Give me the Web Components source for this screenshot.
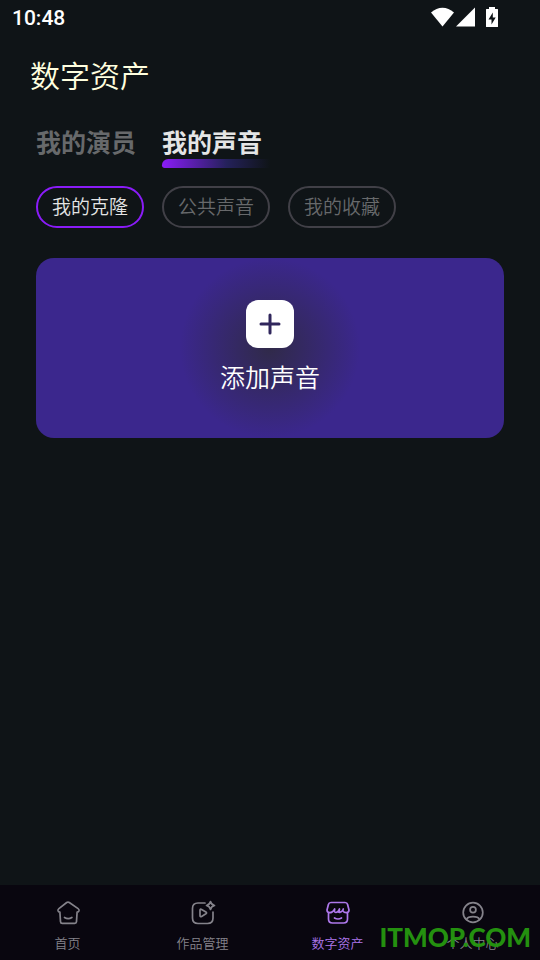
<!DOCTYPE html>
<html lang="zh-CN">
<head>
<meta charset="utf-8">
<meta name="viewport" content="width=device-width, initial-scale=1">
<title>数字资产</title>
<style>
html, body { margin: 0; height: 100%; background: #0f1417; }
body { font-family: Roboto, "Noto Sans CJK SC", sans-serif; }
</style>
</head>
<body>
<assets-app></assets-app>
<script>
const define = (name, html, setup) => {
  const template = document.createElement('template');
  template.innerHTML = html;
  customElements.define(name, class extends HTMLElement {
    constructor() {
      super();
      this.attachShadow({ mode: 'open' }).append(template.content.cloneNode(true));
    }
    connectedCallback() { if (setup) setup(this, this.shadowRoot); }
  });
};

define('status-bar', `
<style>
:host { display: flex; align-items: center; justify-content: space-between; height: 36px; padding: 0 41px 0 12px; color: #fff; }
time { font: 500 21px/36px Roboto, sans-serif; }
svg { display: block; margin-bottom: 2px; }
</style>
<time>10:48</time>
<svg width="68" height="20" viewBox="0 0 68 20" fill="#fff" aria-hidden="true">
  <path d="M0 5.500C7-.8 16-.8 23 5.500L11.500 19.500Z"/>
  <path d="M25 19.500H44V.5Z"/>
  <path fill-rule="evenodd" d="M58 0h6v2h2.500q.5 0 .5.500v17q0 .5-.5.500h-11q-.5 0-.5-.5v-17q0-.5.500-.5H58ZM61.800 5.500l-4.300 7h3v5l4.200-7h-2.900Z"/>
</svg>`);

define('tab-item', `
<style>
:host { display: block; }
button { display: block; border: 0; padding: 0; background: none; color: #67696b; font: 700 25px/36px "Noto Sans CJK SC", sans-serif; cursor: pointer; }
.line { height: 9px; margin-right: -8px; border-radius: 9px 0 0 4px; }
:host([active]) button { color: #e4e5e5; }
:host([active]) .line { background: linear-gradient(90deg, #8a1cf8, #24215a 60%, #0f1417); }
</style>
<button type="button" role="tab"><slot></slot></button><div class="line"></div>`,
(host, root) => root.querySelector('button').setAttribute('aria-selected', host.hasAttribute('active')));

define('filter-chip', `
<style>
:host { display: block; }
button { box-sizing: border-box; height: 42px; padding: 0 14px 2px; border: 2px solid #414047; border-radius: 21px; background: none; color: #67696b; font: 350 19px/36px "Noto Sans CJK SC", sans-serif; cursor: pointer; }
:host([active]) button { border-color: #8a1cf8; color: #e4e5e5; }
</style>
<button type="button"><slot></slot></button>`,
(host, root) => root.querySelector('button').setAttribute('aria-pressed', host.hasAttribute('active')));

define('add-card', `
<style>
:host { display: block; }
button { display: flex; flex-direction: column; align-items: center; justify-content: center; gap: 9px; width: 100%; height: 180px; padding: 0 0 2px; border: 0; border-radius: 18px; background: radial-gradient(circle 90px at center, #302a49, #3b278d) #3b278d; color: #fff; font: 350 25px/38px "Noto Sans CJK SC", sans-serif; cursor: pointer; }
.plus { display: grid; place-items: center; width: 48px; height: 48px; border-radius: 12px; background: #fff; }
</style>
<button type="button">
  <span class="plus"><svg width="22" height="22" viewBox="0 0 22 22" fill="none" stroke="#30265c" stroke-width="3" stroke-linecap="round" aria-hidden="true"><path d="M11 2v18M2 11h18"/></svg></span>
  <span><slot></slot></span>
</button>`);

define('nav-item', `
<style>
:host { display: block; flex: 1; }
a { display: flex; flex-direction: column; align-items: center; gap: 6px; padding-top: 15px; color: #85838b; text-decoration: none; font: 350 13px/22px "Noto Sans CJK SC", sans-serif; }
:host([active]) a { color: #ae78ec; }
::slotted(svg) { display: block; width: 26px; height: 26px; fill: none; stroke: currentColor; stroke-width: 1.700; stroke-linecap: round; stroke-linejoin: round; }
</style>
<a href="#"><slot name="icon"></slot><span><slot></slot></span></a>`,
(host, root) => { if (host.hasAttribute('active')) root.querySelector('a').setAttribute('aria-current', 'page'); });

define('bottom-nav', `
<style>
:host { display: block; background: #09060f; }
nav { display: flex; min-height: 75px; }
svg { color: #85838b; }
[active] svg { color: #ae78ec; }
</style>
<nav>
  <nav-item><svg slot="icon" viewBox="0 0 26 26" aria-hidden="true"><path d="M11.700 2.500q1.300-.8 2.600 0l8.800 6.100q1.200.9.900 2.200-.4 1.300-1.900 1.300l-.6 9.500q-.1 1.700-1.800 1.700H7.300q-1.700 0-1.800-1.700l-.6-9.500q-1.500 0-1.900-1.300-.3-1.300.9-2.200ZM9.500 17.500q3.700 2.300 7.400 0"/></svg>首页</nav-item>
  <nav-item><svg slot="icon" viewBox="0 0 26 26" aria-hidden="true"><path d="M15 3H8Q2.500 3 2.500 8.500v9.500q0 5.500 5.500 5.500h9.500q5.500 0 5.500-5.500v-6M10 10.300q0-1.800 1.600-.9l4.300 2.600q1.300.9 0 1.800l-4.300 2.600q-1.600.9-1.600-.9ZM20.500 1.500q.7 3.300 4 4-3.300.7-4 4-.7-3.300-4-4 3.300-.7 4-4Z"/></svg>作品管理</nav-item>
  <nav-item active><svg slot="icon" viewBox="0 0 26 26" aria-hidden="true"><path d="M6 2.500h14q2.100 0 2.600 2l1.400 5.500q0 2.500-2.500 2.700-2.700.1-3.800-2.200-1.800 2.500-4.700 1.500M17.700 10.500l.6-1.500M6 2.500q-2.100 0-2.600 2L2 10q0 2.500 2.500 2.700 3.300 0 5.200-3.700-.8 3.500 1 3.500 2.200 0 3.800-3.500-.8 3 .5 3.300M3.500 12.500V19q0 4 4 4h11q4 0 4-4v-6.500M9.500 18q3.500 2 7 0"/></svg>数字资产</nav-item>
  <nav-item><svg slot="icon" viewBox="0 0 26 26" aria-hidden="true"><circle cx="13" cy="12.500" r="9.800"/><circle cx="13" cy="9.800" r="2.900"/><path d="M6.500 19.500q1.300-2.800 6.500-2.800t6.500 2.800"/></svg>个人中心</nav-item>
</nav>`);

define('site-mark', `
<style>
:host { position: absolute; right: 9px; bottom: 5px; color: #269610; font: 900 26px/36px Lato, "Open Sans", sans-serif; pointer-events: none; opacity: .96; }
</style>
<slot></slot>`);

define('assets-app', `
<style>
:host { position: relative; display: flex; flex-direction: column; min-height: 100vh; overflow: hidden; }
h1 { margin: 0; padding: 16px 30px 0; color: #ffffdf; font: 350 30px/44px "Noto Sans CJK SC", sans-serif; }
main { flex: 1; padding: 27px 36px; }
.tabs { display: flex; gap: 26px; }
.chips { display: flex; gap: 18px; padding: 18px 0 30px; }
</style>
<status-bar></status-bar>
<h1>数字资产</h1>
<main>
  <div class="tabs" role="tablist"><tab-item>我的演员</tab-item><tab-item active>我的声音</tab-item></div>
  <div class="chips"><filter-chip active>我的克隆</filter-chip><filter-chip>公共声音</filter-chip><filter-chip>我的收藏</filter-chip></div>
  <add-card>添加声音</add-card>
</main>
<bottom-nav></bottom-nav>
<site-mark>ITMOP.COM</site-mark>`);
</script>
</body>
</html>
